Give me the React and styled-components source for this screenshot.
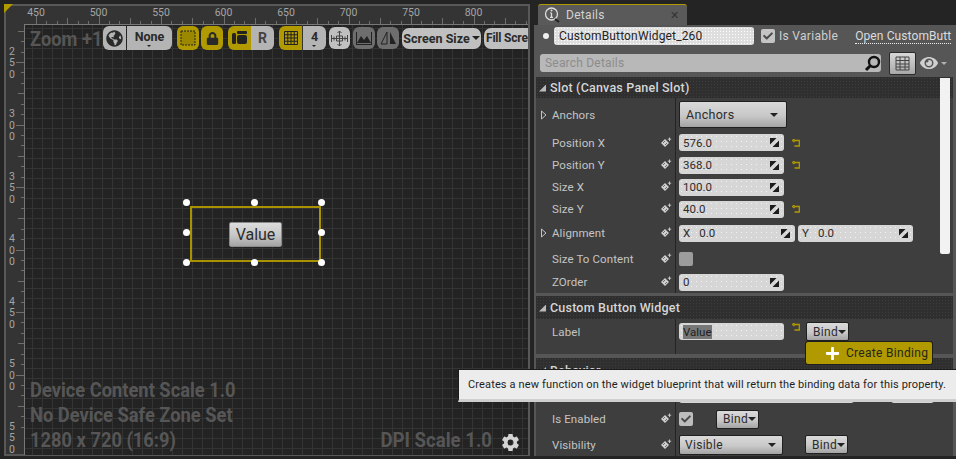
import React from "react";
import styled, { createGlobalStyle, css } from "styled-components";
import { FaGlobeAmericas, FaLock, FaEye, FaPlus, FaCheck } from "react-icons/fa";
import { IoSettingsSharp } from "react-icons/io5";

const GOLD = "#b09a00";

const dots = (color, size = 3) => css`
  background-image: radial-gradient(${color} 0.6px, transparent 0.7px);
  background-size: ${size}px ${size}px;
`;

const GlobalStyle = createGlobalStyle`
  html, body { margin: 0; padding: 0; background: #242424; }
  * { box-sizing: border-box; }
  body { font-family: Roboto, "Liberation Sans", sans-serif; overflow: hidden; }
`;

const Page = styled.div`
  position: relative;
  display: flex;
  gap: 4px;
  width: 956px;
  height: 459px;
  padding: 4px 0 3px 4px;
  overflow: hidden;
`;

/* ---------- designer side ---------- */

const Designer = styled.div`
  position: relative;
  display: grid;
  grid-template-columns: 18px 1fr;
  grid-template-rows: 18px 1fr;
  width: 526px;
  border: 2px solid #585858;
  background-color: #343434;
  ${dots("#232323", 4)}
`;

const Corner = styled.div`
  position: absolute;
  top: -2px;
  left: -2px;
  width: 9px;
  height: 9px;
  background: ${GOLD};
  clip-path: polygon(0 0, 100% 0, 0 100%);
`;

const RulerBox = styled.svg`
  display: block;
  grid-column: ${(p) => p.$col};
  grid-row: ${(p) => p.$row};
  font-family: Roboto, sans-serif;
  font-size: 10.5px;
`;

const Canvas = styled.div`
  position: relative;
  grid-column: 2;
  grid-row: 2;
  overflow: hidden;
  border-top: 1px solid #787878;
  border-left: 1px solid #787878;
  background-color: #232323;
  background-image:
    linear-gradient(#343434 1px, transparent 1px),
    linear-gradient(90deg, #343434 1px, transparent 1px),
    radial-gradient(#303030 0.6px, transparent 0.7px);
  background-size: 10px 10px, 10px 10px, 4px 4px;
  background-position: 0 3px, 7px 0, 0 0;
`;

const Toolbar = styled.div`
  position: absolute;
  top: 1px;
  left: 78px;
  display: flex;
  align-items: center;
  height: 24px;
  white-space: nowrap;
`;

const ToolBtn = styled.div`
  display: flex;
  flex: none;
  align-items: center;
  justify-content: center;
  gap: 2px;
  width: ${(p) => p.$w}px;
  height: ${(p) => p.$h || 24}px;
  margin-left: ${(p) => p.$gap || 0}px;
  border-radius: ${(p) => p.$round || "5px"};
  background: ${(p) => p.$bg || "#b4b4b4"};
  color: ${(p) => p.$color || "#2a2a2a"};
  font-size: ${(p) => p.$fs || 12.5}px;
  font-weight: 700;
  position: relative;
`;

const ClippedBtn = styled(ToolBtn)`
  justify-content: flex-start;
  padding-left: 2px;
  letter-spacing: -0.2px;
`;

const Caret = styled.span`
  display: block;
  width: 0;
  height: 0;
  border-left: ${(p) => p.$size || 2}px solid transparent;
  border-right: ${(p) => p.$size || 2}px solid transparent;
  border-top: ${(p) => p.$size || 2}px solid ${(p) => p.$color || "#222"};
`;

const Stack = styled.div`
  display: flex;
  flex-direction: column;
  align-items: center;
  gap: 1px;
  line-height: 14px;
`;

const Overlay = styled.div`
  position: absolute;
  left: 5px;
  color: #565656;
  font-size: 20px;
  font-weight: 700;
  line-height: 25px;
  white-space: nowrap;
  transform: scaleX(0.915);
  transform-origin: left center;
`;

const ZoomText = styled(Overlay)`
  top: 2px;
`;

const InfoText = styled(Overlay)`
  bottom: 2px;
`;

const DpiText = styled(Overlay)`
  left: auto;
  right: 36px;
  bottom: 2px;
  transform: scaleX(0.93);
  transform-origin: right center;
`;

const Gear = styled.div`
  position: absolute;
  right: 8px;
  bottom: 3px;
  display: flex;
  color: #d4d4d4;
  font-size: 19px;
`;

const Frame = styled.div`
  position: absolute;
  left: 165px;
  top: 181px;
  display: flex;
  align-items: center;
  justify-content: center;
  width: 131px;
  height: 56px;
  border: 2px solid #a89200;
`;

const Handle = styled.span`
  position: absolute;
  left: ${(p) => p.$x}px;
  top: ${(p) => p.$y}px;
  width: 7px;
  height: 7px;
  border-radius: 50%;
  background: #fff;
`;

const ValueBtn = styled.div`
  width: 53px;
  height: 25px;
  margin-top: 1px;
  border: 1px solid #8a8a8a;
  border-radius: 2px;
  background: linear-gradient(#dcdcdc, #c6c6c6 55%, #a4a4a4);
  color: #2c2c2c;
  font-size: 16px;
  line-height: 23px;
  text-align: center;
`;

/* ---------- details side ---------- */

const Details = styled.div`
  display: flex;
  flex-direction: column;
  flex: 1;
  min-width: 0;
`;

const TabStrip = styled.div`
  display: flex;
  height: 21px;
  padding-left: 4px;
`;

const Tab = styled.div`
  display: flex;
  align-items: center;
  width: 149px;
  padding: 0 8px 0 6px;
  border-top: 1px solid ${GOLD};
  border-radius: 3px 3px 0 0;
  background-color: #5a5a5a;
  color: #d2d2d2;
  font-size: 12px;
  ${dots("#444", 6)}
`;

const TabLabel = styled.span`
  flex: 1;
  margin-left: 6px;
  letter-spacing: 0.3px;
`;

const TabClose = styled.span`
  color: #333;
  font-size: 11px;
`;

const Body = styled.div`
  flex: 1;
  min-height: 0;
  padding: 2px 3px 3px 2px;
  background-color: #565656;
  overflow: hidden;
  position: relative;
`;

const NameRow = styled.div`
  display: flex;
  align-items: center;
  height: 18px;
  padding-left: 7px;
  white-space: nowrap;
  overflow: hidden;
`;

const Bullet = styled.span`
  flex: none;
  width: 6px;
  height: 6px;
  border-radius: 50%;
  background: #f0f0f0;
`;

const NameInput = styled.div`
  flex: none;
  width: 200px;
  height: 18px;
  margin-left: 5px;
  padding-left: 5px;
  border-radius: 3px;
  background-color: #dedede;
  color: #242424;
  font-size: 12px;
  line-height: 18px;
  letter-spacing: 0.15px;
  ${dots("#fff", 3)}
`;

const Check = styled.div`
  display: flex;
  align-items: center;
  justify-content: center;
  flex: none;
  width: 14px;
  height: 14px;
  margin-left: ${(p) => p.$gap || 0}px;
  border-radius: 2px;
  background: ${(p) => p.$bg || "#bdbdbd"};
  color: #4a4a4a;
  font-size: 10px;
`;

const VarLabel = styled.span`
  flex: none;
  margin-left: 4px;
  color: #cfcfcf;
  font-size: 12px;
  letter-spacing: 0.3px;
`;

const OpenLink = styled.span`
  flex: none;
  margin-left: 17px;
  border-bottom: 1px dotted #f0f0f0;
  color: #dcdcdc;
  font-size: 12px;
  line-height: 14px;
  letter-spacing: 0.1px;
`;

const SearchRow = styled.div`
  display: flex;
  align-items: center;
  height: 24px;
  margin-top: 6px;
  padding-left: 4px;
`;

const SearchBox = styled.div`
  display: flex;
  align-items: center;
  justify-content: space-between;
  width: 341px;
  height: 18px;
  padding: 0 0 0 5px;
  border-radius: 3px;
  background-color: #b8b8b8;
  color: #8c8c8c;
  font-size: 12px;
  letter-spacing: 0.2px;
  ${dots("#e0e0e0", 2)}
`;

const ViewBtn = styled.div`
  display: flex;
  align-items: center;
  justify-content: center;
  width: 27px;
  height: 23px;
  margin-left: 8px;
  border: 1px solid #2a2a2a;
  border-radius: 2px;
  background: linear-gradient(#d8d8d8, #a8a8a8);
`;

const EyeWrap = styled.div`
  display: flex;
  align-items: center;
  gap: 3px;
  margin-left: 4px;
  color: #d0d0d0;
  font-size: 18px;
`;

const Section = styled.div`
  margin-top: ${(p) => p.$top || 0}px;
  background: #3e3e3e;
`;

const SectionHead = styled.div`
  display: flex;
  align-items: center;
  gap: 4px;
  height: ${(p) => p.$h}px;
  padding-left: 3px;
  background-color: #2f2f2f;
  color: #d6d6d6;
  font-size: 12.5px;
  font-weight: 500;
  letter-spacing: 0.2px;
  ${dots("#3d3d3d", 3)}
`;

const HeadArrow = styled.span`
  width: 7px;
  height: 7px;
  margin-top: 1px;
  background: #bbb;
  clip-path: polygon(100% 0, 100% 100%, 0 100%);
`;

const Row = styled.div`
  display: grid;
  grid-template-columns: 140px 1fr;
  height: ${(p) => p.$h}px;
`;

const LabelCell = styled.div`
  position: relative;
  display: flex;
  align-items: ${(p) => (p.$top ? "flex-start" : "center")};
  padding-top: ${(p) => (p.$top ? 6 : 0)}px;
  padding-left: 16px;
  border-right: 1px solid #242424;
  color: #c4c4c4;
  font-size: 11.5px;
  letter-spacing: 0.1px;
`;

const Expander = styled.svg`
  position: absolute;
  left: 5px;
`;

const KeyIcon = styled.svg`
  position: absolute;
  right: 3px;
  top: 50%;
  margin-top: -6px;
`;

const ValueCell = styled.div`
  display: flex;
  align-items: ${(p) => (p.$top ? "flex-start" : "center")};
  padding-top: ${(p) => (p.$top ? 4 : 0)}px;
  padding-left: 3px;
`;

const NumBox = styled.div`
  position: relative;
  display: flex;
  align-items: center;
  flex: none;
  width: ${(p) => p.$w || 105}px;
  height: 17px;
  margin-left: ${(p) => p.$gap || 0}px;
  padding-left: 4px;
  border-radius: 3px;
  background-color: #d6d6d6;
  color: #2c2c2c;
  font-size: 11.5px;
  ${dots("#f2f2f2", 5)}
`;

const AxisTag = styled.span`
  margin-right: 9px;
`;

const Spin = styled.svg`
  position: absolute;
  right: 5px;
  top: 4px;
`;

const Selected = styled.span`
  background: #777;
  color: #222;
`;

const DropBtn = styled.div`
  display: flex;
  align-items: center;
  justify-content: space-between;
  flex: none;
  width: ${(p) => p.$w}px;
  height: ${(p) => p.$h}px;
  margin-left: ${(p) => p.$gap || 0}px;
  margin-top: ${(p) => p.$mt || 0}px;
  padding: 0 ${(p) => p.$pr || 4}px 0 ${(p) => p.$pl || 6}px;
  border: 1px solid #202020;
  border-radius: 2px;
  background: linear-gradient(#dadada, #c8c8c8 55%, #a4a4a4);
  color: #2c2c2c;
  font-size: ${(p) => p.$fs || 12}px;
  letter-spacing: 0.3px;
`;

const ResetIcon = styled.svg`
  flex: none;
  margin-left: 8px;
`;

const Reset = () => (
  <ResetIcon width="8" height="8" viewBox="0 0 8 8">
    <path d="M2 1.5H7.3V7H2.5M2.5 0L0.5 1.5L2.5 3" fill="none" stroke={GOLD} strokeWidth="1.3" />
  </ResetIcon>
);

const Key = () => (
  <KeyIcon width="12" height="12" viewBox="0 0 12 12">
    <path d="M5 2L9 6L5 10L1 6Z" fill="#cfcfcf" />
    <path d="M3 6L5 4M5 8L7 6" stroke="#555" strokeWidth="0.8" />
    <path d="M9.5 0.5V4M7.8 2.2H11.2" stroke="#cfcfcf" strokeWidth="0.9" />
  </KeyIcon>
);

const Arrow = () => (
  <Expander width="6" height="10" viewBox="0 0 6 10">
    <path d="M0.5 1L5 5L0.5 9Z" fill="none" stroke="#c4c4c4" />
  </Expander>
);

const SpinIcon = () => (
  <Spin width="9" height="9" viewBox="0 0 9 9">
    <path d="M0 0H6.5L0 6.5Z M9 2.5V9H2.5Z" fill="#1c1c1c" />
  </Spin>
);

const Binding = styled.div`
  position: absolute;
  left: 272px;
  top: 317px;
  display: flex;
  align-items: center;
  width: 126px;
  height: 22px;
  padding-left: 19px;
  border-radius: 2px;
  background: ${GOLD};
  box-shadow: 0 0 0 1px #1e1e1e;
  color: #26261c;
  font-size: 12px;
  letter-spacing: 0.3px;
`;

const BindPlus = styled.span`
  display: flex;
  margin-right: 6px;
  color: #fff;
  font-size: 15px;
`;

const Scrollbar = styled.div`
  position: absolute;
  right: 6px;
  top: 53px;
  width: 10px;
  height: 176px;
  border-radius: 0 0 2px 2px;
  background: #f2f2f2;
`;

const Tip = styled.div`
  position: absolute;
  left: 458px;
  top: 369px;
  width: 498px;
  height: 33px;
  padding-left: 9px;
  border: 1px solid #1c1c1c;
  border-right: 0;
  border-bottom: 3px solid #cfcfcf;
  background-color: #ececec;
  color: #1f1f1f;
  font-size: 11px;
  line-height: 29px;
  letter-spacing: 0.14px;
  white-space: nowrap;
  ${dots("#fff", 4)}
`;

const STEP = 62.5 / 6;
const hLabels = ["450", "500", "550", "600", "650", "700", "750", "800"];
const vLabels = ["250", "300", "350", "400", "450", "500", "550"];

// every 6th tick carries a number, every 3rd one is a little longer
const tickLength = (i) => (i % 6 === 0 ? 8 : i % 3 === 0 ? 6 : 3);

const TopRuler = () => (
  <RulerBox $col="2" $row="1" width="504" height="18">
    {Array.from({ length: 50 }, (_, i) => {
      const x = Math.round(12 + i * STEP) + 0.5;
      return <line key={i} x1={x} x2={x} y1={18 - tickLength(i)} y2="18" stroke="#6e6e6e" />;
    })}
    {hLabels.map((label, i) => (
      <text key={label} x={12 + i * 62.5} y="10" fill="#a4a4a4" textAnchor="middle">
        {label}
      </text>
    ))}
  </RulerBox>
);

const LeftRuler = () => (
  <RulerBox $col="1" $row="2" width="18" height="431">
    {Array.from({ length: 42 }, (_, i) => {
      const y = Math.round(38 - 62.5 + i * STEP) + 0.5;
      return <line key={i} x1={18 - tickLength(i)} x2="18" y1={y} y2={y} stroke="#6e6e6e" />;
    })}
    {vLabels.map((label, row) =>
      label.split("").map((d, i) => (
        <text key={label + i} x="3" y={38 + row * 62.5 + 4 + (i - 1) * 11.5} fill="#a4a4a4">
          {d}
        </text>
      ))
    )}
  </RulerBox>
);

const BINDS = [
  { label: "Position X", value: "576.0", reset: true, h: 23 },
  { label: "Position Y", value: "368.0", reset: true, h: 22 },
  { label: "Size X", value: "100.0", h: 22 },
  { label: "Size Y", value: "40.0", reset: true, h: 22 },
];

const HANDLES = [
  [-9, -9],
  [59, -9],
  [126, -9],
  [-9, 21],
  [126, 21],
  [-9, 51],
  [59, 51],
  [126, 51],
];

export default function App() {
  return (
    <Page>
      <GlobalStyle />
      <Designer>
        <Corner />
        <TopRuler />
        <LeftRuler />
        <Canvas>
          <ZoomText>Zoom +1</ZoomText>
          <Frame>
            {HANDLES.map(([x, y]) => (
              <Handle key={`${x}-${y}`} $x={x} $y={y} />
            ))}
            <ValueBtn>Value</ValueBtn>
          </Frame>
          <InfoText>
            Device Content Scale 1.0
            <br />
            No Device Safe Zone Set
            <br />
            1280 x 720 (16:9)
          </InfoText>
          <DpiText>DPI Scale 1.0</DpiText>
          <Gear>
            <IoSettingsSharp />
          </Gear>
          <Toolbar>
            <ToolBtn $w={23} $round="6px 0 0 6px" $fs={17}>
              <FaGlobeAmericas />
            </ToolBtn>
            <ToolBtn $w={45} $gap={1} $round="0 6px 6px 0">
              <Stack>
                None
                <Caret />
              </Stack>
            </ToolBtn>
            <ToolBtn $w={22} $gap={5} $bg={GOLD} $round="6px">
              <svg width="16" height="16" viewBox="0 0 16 16">
                <rect x="1" y="1" width="14" height="14" fill="#9b8700" stroke="#222" strokeDasharray="2 1" />
              </svg>
            </ToolBtn>
            <ToolBtn $w={22} $gap={2} $bg={GOLD} $round="6px" $fs={13}>
              <FaLock />
            </ToolBtn>
            <ToolBtn $w={23} $gap={5} $bg={GOLD} $round="6px 0 0 6px">
              <svg width="15" height="14" viewBox="0 0 15 14">
                <rect x="0" y="2" width="4" height="11" rx="1.5" fill="#222" />
                <rect x="5" y="0" width="10" height="3" rx="1" fill="#222" />
                <rect x="5" y="4" width="10" height="9" rx="2" fill="#222" />
              </svg>
            </ToolBtn>
            <ToolBtn $w={23} $round="0 6px 6px 0" $fs={14} $color="#444">
              R
            </ToolBtn>
            <ToolBtn $w={23} $gap={5} $bg={GOLD} $round="6px 0 0 6px">
              <svg width="14" height="14" viewBox="0 0 14 14">
                <path
                  d="M0.5 0.5H13.5V13.5H0.5Z M3.75 0.5V13.5 M7 0.5V13.5 M10.25 0.5V13.5 M0.5 3.75H13.5 M0.5 7H13.5 M0.5 10.25H13.5"
                  fill="none"
                  stroke="#222"
                />
              </svg>
            </ToolBtn>
            <ToolBtn $w={23} $gap={1} $round="0 6px 6px 0">
              <Stack>
                4
                <Caret />
              </Stack>
            </ToolBtn>
            <ToolBtn $w={21} $h={22} $gap={3} $bg="#c0c0c0" $round="6px">
              <svg width="17" height="17" viewBox="0 0 17 17">
                <path
                  d="M8.5 1V16M1 8.5H16M6.5 3L8.5 1L10.5 3M6.5 14L8.5 16L10.5 14M3 6.5V10.5M14 6.5V10.5M0.5 5V12M16.5 5V12M5.5 6H11.5V11H5.5Z"
                  fill="none"
                  stroke="#444"
                />
              </svg>
            </ToolBtn>
            <ToolBtn $w={22} $h={22} $gap={3} $bg="#6e6e6e" $round="6px">
              <svg width="16" height="13" viewBox="0 0 16 13">
                <path d="M0.5 0V13M15.5 0V13M0 12.5H16" stroke="#222" />
                <path d="M1 11L5 4L8 8L11 4L15 11Z" fill="#222" />
              </svg>
            </ToolBtn>
            <ToolBtn $w={22} $h={22} $gap={2} $bg="#6e6e6e" $round="6px">
              <svg width="17" height="14" viewBox="0 0 17 14">
                <path d="M7 1L1 13H7Z" fill="none" stroke="#222" />
                <path d="M10 1L16 13H10Z" fill="#222" />
              </svg>
            </ToolBtn>
            <ToolBtn $w={79} $h={21} $gap={3} $bg="#c0c0c0" $round="7px">
              Screen Size
              <Caret $size={4} />
            </ToolBtn>
            <ClippedBtn $w={44} $h={21} $gap={3} $bg="#c0c0c0" $round="7px 0 0 7px" $fs={12}>
              Fill Scre
            </ClippedBtn>
          </Toolbar>
        </Canvas>
      </Designer>

      <Details>
        <TabStrip>
          <Tab>
            <svg width="16" height="16" viewBox="0 0 16 16">
              <circle cx="7.5" cy="7" r="6" fill="none" stroke="#ddd" strokeWidth="1.3" />
              <path d="M7.5 6V10M6 10.3H9M6.3 5.8H7.5" stroke="#ddd" strokeWidth="1.3" fill="none" />
              <circle cx="7.5" cy="3.6" r="1" fill="#ddd" />
              <path d="M11 12L15 15" stroke="#222" strokeWidth="2" />
            </svg>
            <TabLabel>Details</TabLabel>
            <TabClose>✕</TabClose>
          </Tab>
        </TabStrip>
        <Body>
          <NameRow>
            <Bullet />
            <NameInput>CustomButtonWidget_260</NameInput>
            <Check $gap={7} $bg="#c4c4c4">
              <FaCheck />
            </Check>
            <VarLabel>Is Variable</VarLabel>
            <OpenLink>Open CustomButt</OpenLink>
          </NameRow>
          <SearchRow>
            <SearchBox>
              Search Details
              <svg width="17" height="17" viewBox="0 0 17 17">
                <circle cx="10" cy="7" r="5" fill="none" stroke="#111" strokeWidth="2.4" />
                <path d="M6.5 10.5L2 15" stroke="#111" strokeWidth="3" />
              </svg>
            </SearchBox>
            <ViewBtn>
              <svg width="15" height="15" viewBox="0 0 15 15">
                <path
                  d="M1 1H14V14H1Z M1 4.5H14 M1 8H14 M1 11H14 M5 1V14 M10 1V14"
                  fill="none"
                  stroke="#444"
                />
              </svg>
            </ViewBtn>
            <EyeWrap>
              <FaEye />
              <Caret $size={3} $color="#b0b0b0" />
            </EyeWrap>
          </SearchRow>

          <Section $top={2}>
            <SectionHead $h={21}>
              <HeadArrow />
              Slot (Canvas Panel Slot)
            </SectionHead>
            <Row $h={33}>
              <LabelCell>
                <Arrow />
                Anchors
              </LabelCell>
              <ValueCell>
                <DropBtn $w={108} $h={27} $fs={12.5} $pr={8}>
                  Anchors
                  <Caret $size={4} />
                </DropBtn>
              </ValueCell>
            </Row>
            {BINDS.map((b) => (
              <Row key={b.label} $h={b.h}>
                <LabelCell>
                  {b.label}
                  <Key />
                </LabelCell>
                <ValueCell>
                  <NumBox>
                    {b.value}
                    <SpinIcon />
                  </NumBox>
                  {b.reset && <Reset />}
                </ValueCell>
              </Row>
            ))}
            <Row $h={26}>
              <LabelCell>
                <Arrow />
                Alignment
                <Key />
              </LabelCell>
              <ValueCell>
                <NumBox $w={116}>
                  <AxisTag>X</AxisTag>0.0
                  <SpinIcon />
                </NumBox>
                <NumBox $w={115} $gap={3}>
                  <AxisTag>Y</AxisTag>0.0
                  <SpinIcon />
                </NumBox>
              </ValueCell>
            </Row>
            <Row $h={25}>
              <LabelCell>
                Size To Content
                <Key />
              </LabelCell>
              <ValueCell>
                <Check $bg="#9c9c9c" />
              </ValueCell>
            </Row>
            <Row $h={22}>
              <LabelCell>
                ZOrder
                <Key />
              </LabelCell>
              <ValueCell>
                <NumBox>
                  0
                  <SpinIcon />
                </NumBox>
              </ValueCell>
            </Row>
          </Section>

          <Section $top={3}>
            <SectionHead $h={23}>
              <HeadArrow />
              Custom Button Widget
            </SectionHead>
            <Row $h={35}>
              <LabelCell $top>Label</LabelCell>
              <ValueCell $top>
                <NumBox>
                  <Selected>Value</Selected>
                </NumBox>
                <Reset />
                <DropBtn $w={43} $h={19} $gap={6} $pr={3} $mt={-1}>
                  Bind
                  <Caret $size={4} />
                </DropBtn>
              </ValueCell>
            </Row>
          </Section>

          <Section $top={4}>
            <SectionHead $h={24}>
              <HeadArrow />
              Behavior
            </SectionHead>
            <Row $h={24}>
              <LabelCell />
              <ValueCell>
                <NumBox $w={175} />
                <NumBox $w={43} $gap={37} />
              </ValueCell>
            </Row>
            <Row $h={26}>
              <LabelCell>
                Is Enabled
                <Key />
              </LabelCell>
              <ValueCell>
                <Check>
                  <FaCheck />
                </Check>
                <DropBtn $w={43} $h={19} $gap={23} $pr={3}>
                  Bind
                  <Caret $size={4} />
                </DropBtn>
              </ValueCell>
            </Row>
            <Row $h={25}>
              <LabelCell>
                Visibility
                <Key />
              </LabelCell>
              <ValueCell>
                <DropBtn $w={104} $h={20} $pr={6} $pl={5}>
                  Visible
                  <Caret $size={4} />
                </DropBtn>
                <DropBtn $w={43} $h={19} $gap={22} $pr={3}>
                  Bind
                  <Caret $size={4} />
                </DropBtn>
              </ValueCell>
            </Row>
          </Section>

          <Scrollbar />
          <Binding>
            <BindPlus>
              <FaPlus />
            </BindPlus>
            Create Binding
          </Binding>
        </Body>
      </Details>
      <Tip>Creates a new function on the widget blueprint that will return the binding data for this property.</Tip>
    </Page>
  );
}
